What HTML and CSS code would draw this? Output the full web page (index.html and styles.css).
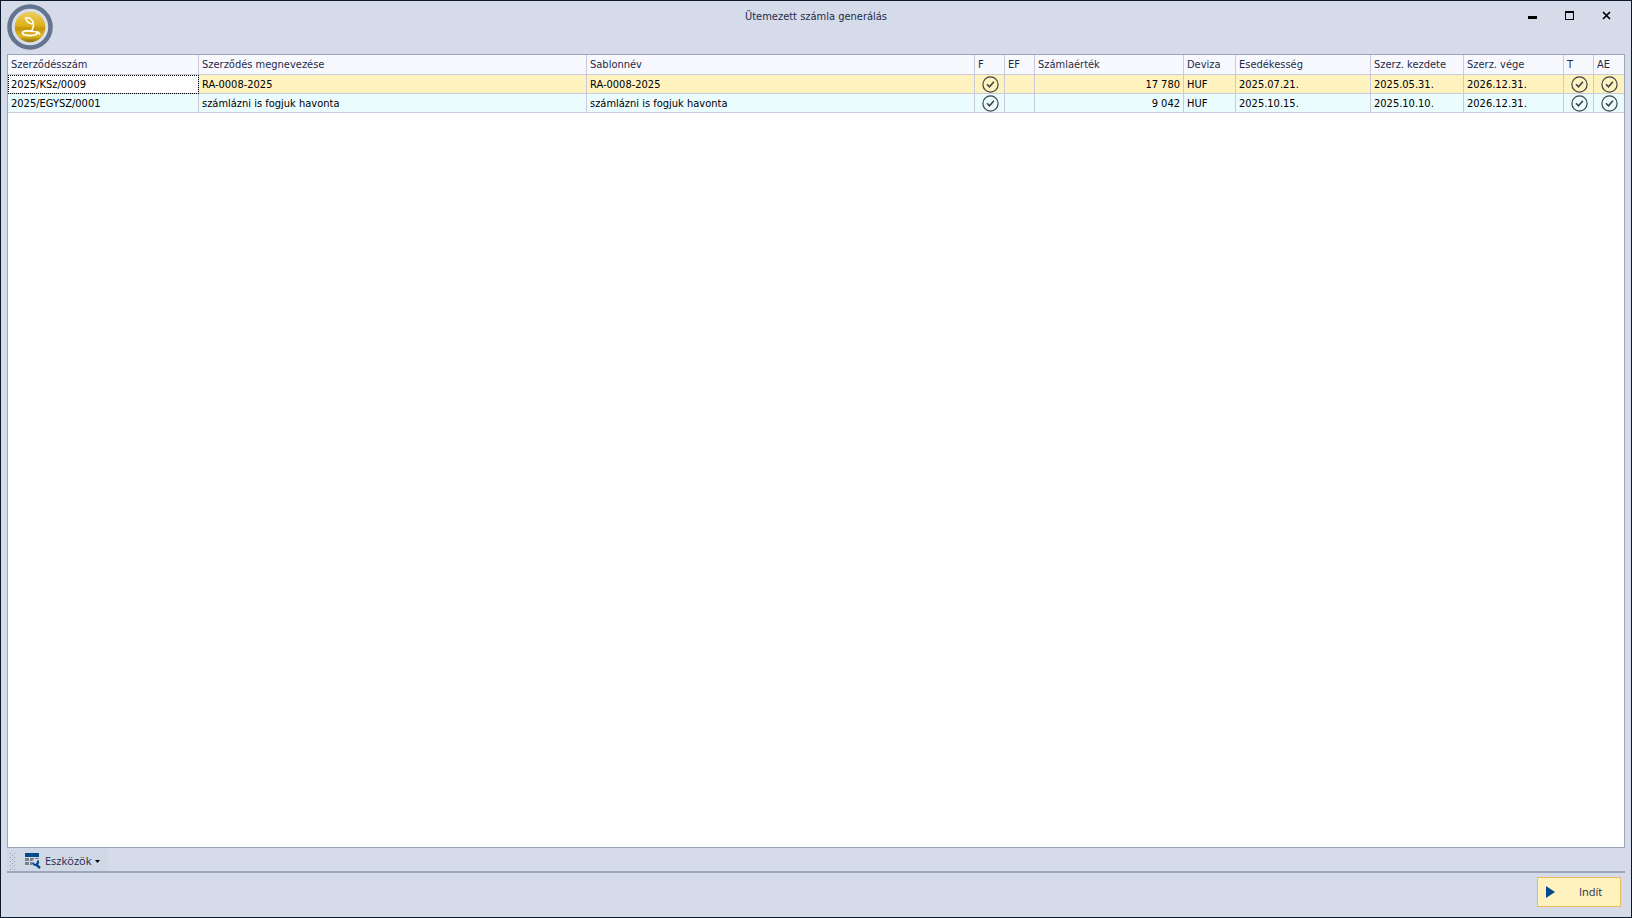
FILE: index.html
```html
<!DOCTYPE html>
<html lang="hu">
<head>
<meta charset="utf-8">
<title>Ütemezett számla generálás</title>
<link rel="stylesheet" href="styles.css">
</head>
<body>
<svg class="symbols" aria-hidden="true">
  <symbol id="check" viewBox="0 0 17 17">
    <circle cx="8.5" cy="8.5" r="7.6" fill="none" stroke="#3f4144" stroke-width="1.2"/>
    <path d="M5 8.3l2.500 2.500 4.400-5" fill="none" stroke="#3f4144" stroke-width="1.6"/>
  </symbol>
</svg>
<div class="window">
  <header class="titlebar">
    <svg class="logo" viewBox="0 0 46 46" aria-hidden="true">
      <defs>
        <linearGradient id="gold" x1="0" y1="0" x2="0" y2="1">
          <stop offset="0" stop-color="#ecd060"/>
          <stop offset="0.45" stop-color="#dcb01c"/>
          <stop offset="0.55" stop-color="#c4960a"/>
          <stop offset="0.8" stop-color="#e2b820"/>
          <stop offset="1" stop-color="#8c6b06"/>
        </linearGradient>
      </defs>
      <circle cx="23" cy="23" r="20.5" fill="#d9dfea" stroke="#64748f" stroke-width="4.5"/>
      <circle cx="23" cy="23" r="15.3" fill="url(#gold)"/>
      <path d="M18.500 14c4-1 7 1 8 6-4 0-7-2-8-6zM26.500 20c.5 3-1 4.500-2 7" fill="none" stroke="#fff" stroke-width="1.4"/>
      <path d="M27 27.500c-4-1-11.500-1-11.500 1.500s9 3.500 13.500 1.500c2.500-1 1-3-2-3M29 28c2-.5 3 .5 4 2.500" fill="none" stroke="#fff" stroke-width="1.7"/>
    </svg>
    <h1 class="title">Ütemezett számla generálás</h1>
    <div class="controls">
      <button class="control" aria-label="Kis méret"><svg viewBox="0 0 9 9"><path d="M0 5h9v3H0z"/></svg></button>
      <button class="control" aria-label="Teljes méret"><svg viewBox="0 0 9 9"><path d="M0 0h9v9H0zM1 2v6h7V2z" fill-rule="evenodd"/></svg></button>
      <button class="control" aria-label="Bezárás"><svg viewBox="0 0 9 9"><path d="M1 1l7 7M8 1L1 8" stroke="#000" stroke-width="1.7"/></svg></button>
    </div>
  </header>
  <main class="grid">
    <table class="table">
      <colgroup>
        <col class="c-num"><col><col><col class="c-flag"><col class="c-flag"><col class="c-value"><col class="c-cur"><col class="c-due"><col class="c-start"><col class="c-end"><col class="c-flag"><col class="c-flag">
      </colgroup>
      <thead>
        <tr><th>Szerződésszám</th><th>Szerződés megnevezése</th><th>Sablonnév</th><th>F</th><th>EF</th><th>Számlaérték</th><th>Deviza</th><th>Esedékesség</th><th>Szerz. kezdete</th><th>Szerz. vége</th><th>T</th><th>AE</th></tr>
      </thead>
      <tbody>
        <tr class="selected"><td class="focused">2025/KSz/0009</td><td>RA-0008-2025</td><td>RA-0008-2025</td><td class="flag"><svg class="check"><use href="#check"/></svg></td><td></td><td class="number">17 780</td><td>HUF</td><td>2025.07.21.</td><td>2025.05.31.</td><td>2026.12.31.</td><td class="flag"><svg class="check"><use href="#check"/></svg></td><td class="flag"><svg class="check"><use href="#check"/></svg></td></tr>
        <tr class="alt"><td>2025/EGYSZ/0001</td><td>számlázni is fogjuk havonta</td><td>számlázni is fogjuk havonta</td><td class="flag"><svg class="check"><use href="#check"/></svg></td><td></td><td class="number">9 042</td><td>HUF</td><td>2025.10.15.</td><td>2025.10.10.</td><td>2026.12.31.</td><td class="flag"><svg class="check"><use href="#check"/></svg></td><td class="flag"><svg class="check"><use href="#check"/></svg></td></tr>
      </tbody>
    </table>
  </main>
  <div class="toolbar">
    <div class="tools">
      <svg class="grip" viewBox="0 0 5 17" aria-hidden="true">
        <path fill="#98a3b8" d="M0 0h1v1H0zM4 0h1v1H4zM2 2h1v1H2zM0 4h1v1H0zM4 4h1v1H4zM2 6h1v1H2zM0 8h1v1H0zM4 8h1v1H4zM2 10h1v1H2zM0 12h1v1H0zM4 12h1v1H4zM2 14h1v1H2zM0 16h1v1H0zM4 16h1v1H4z"/>
      </svg>
      <button class="tool">
        <svg class="tool-icon" viewBox="0 0 16 16" aria-hidden="true">
          <path fill="#004b8d" d="M0 0h14v4H0z"/>
          <path fill="#7b8087" d="M0 5h4v3H0zM5 5h4v1L7 8H5zM10 5h4v1h-4zM0 9h4v3H0zM5 9h2v3H5z"/>
          <path fill="none" stroke="#004b8d" stroke-width="2" d="M8 9.500c0 2 2 3 3.500 2s2-2.500 1-4"/>
          <path fill="none" stroke="#004b8d" stroke-width="2.4" d="M10.500 11l4.500 4"/>
        </svg>
        Eszközök
        <svg class="caret" viewBox="0 0 5 3" aria-hidden="true"><path d="M0 0h5L2.500 3z"/></svg>
      </button>
    </div>
  </div>
  <footer class="footer">
    <button class="start"><svg class="play" viewBox="0 0 9 12" aria-hidden="true"><path fill="#004b8d" d="M0 0l9 6-9 6z"/></svg><span class="start-label">Indít</span></button>
  </footer>
</div>
</body>
</html>
```

FILE: styles.css
```css
* { box-sizing: border-box; }

body {
  margin: 0;
  font: 11px/14px "DejaVu Sans Condensed", "DejaVu Sans", sans-serif;
  color: #1e2a4a;
}

button {
  padding: 0;
  border: 0;
  background: none;
  font: inherit;
  color: inherit;
}

.symbols { display: none; }

.window {
  display: flex;
  flex-direction: column;
  min-height: 100vh;
  padding: 0 6px 10px;
  border: 1px solid #0c1a2e;
  background: #d6dbe9;
}

.titlebar {
  display: grid;
  grid-template-columns: 1fr auto 1fr;
  height: 53px;
}

.logo {
  width: 46px;
  height: 46px;
  margin-top: 3px;
}

.title {
  margin: 9px 0 0;
  font-size: 11px;
  font-weight: 400;
}

.controls {
  display: flex;
  justify-self: end;
  gap: 28px;
  height: 9px;
  margin: 10px 14px 0 0;
}

.control {
  width: 9px;
  height: 9px;
}

.control svg { display: block; }

.grid {
  flex: 1;
  border: 1px solid #9ca6ba;
  background: #fff;
}

.table {
  width: 100%;
  table-layout: fixed;
  border-collapse: separate;
  border-spacing: 0;
}

.c-num { width: 191px; }
.c-flag { width: 30px; }
.c-value { width: 149px; }
.c-cur { width: 52px; }
.c-due { width: 135px; }
.c-start { width: 93px; }
.c-end { width: 100px; }

.table th,
.table td {
  height: 19px;
  padding: 0 3px;
  border: solid #c9cbdc;
  border-width: 0 1px 1px 0;
  text-align: left;
  white-space: nowrap;
}

.table th {
  height: 20px;
  background: #f8f9fe;
  font-weight: 400;
}

.table td {
  padding-top: 2px;
  color: #000;
}

.table th:last-child,
.table td:last-child { border-right: 0; }

.table .number { text-align: right; }
.table .flag { padding: 0 0 0 7px; }
.selected { background: #fef2bf; }
.alt { background: #ebfcff; }

.table .focused {
  background: #fff;
  outline: 1px dotted #000;
  outline-offset: -1px;
}

.check {
  display: block;
  width: 17px;
  height: 17px;
}

.toolbar {
  height: 25px;
  border-bottom: 2px solid #9ca6ba;
}

.tools {
  display: flex;
  align-items: center;
  width: 101px;
  height: 23px;
  padding: 3px 0 0 3px;
  background: #d0d7e5;
}

.grip {
  width: 5px;
  height: 17px;
}

.tool {
  display: flex;
  align-items: center;
  gap: 4px;
  margin-left: 10px;
  font: 11px/16px "Open Sans", "Noto Sans", sans-serif;
}

.tool-icon {
  width: 16px;
  height: 16px;
}

.caret {
  width: 5px;
  height: 3px;
}

.footer {
  display: flex;
  justify-content: flex-end;
  padding: 4px 4px 0 0;
}

.start {
  display: flex;
  align-items: center;
  width: 84px;
  height: 30px;
  padding-left: 8px;
  border: 1px solid #e8bc5b;
  background: #fff2be;
  font: 11px/16px "Open Sans", "Noto Sans", sans-serif;
}

.play {
  width: 9px;
  height: 12px;
}

.start-label {
  flex: 1;
  padding-left: 6px;
}
```
